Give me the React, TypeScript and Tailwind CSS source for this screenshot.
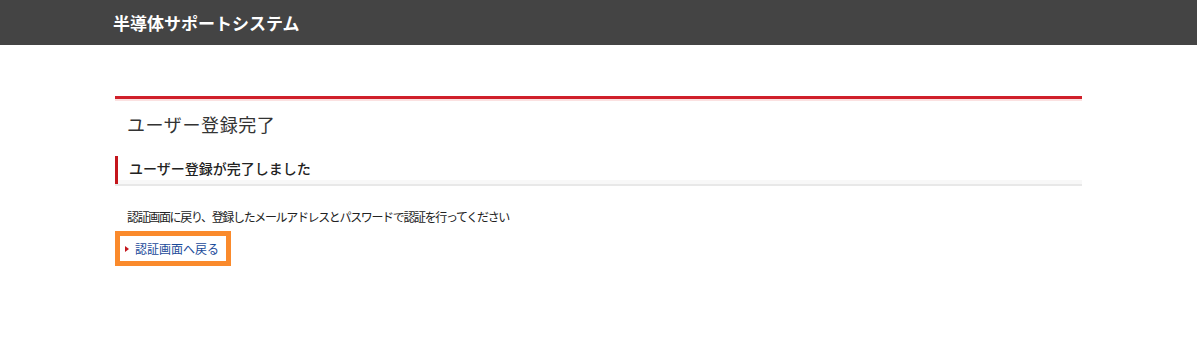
export default function App() {
  const jp = { fontFamily: '"Noto Sans CJK JP", "Noto Sans", sans-serif' };
  return (
    <div className="min-h-[360px] bg-white" style={jp}>
      <header className="h-[45px] bg-[#444444]">
        <div className="mx-auto flex h-full w-[971px] items-center">
          <h1 className="text-[17px] font-bold text-white">半導体サポートシステム</h1>
        </div>
      </header>

      <main className="mx-auto mt-[51px] w-[967px]">
        <div className="border-t-[3px] border-[#d0202a]">
          <div className="h-[2px] bg-[#fbe1e1]" />
          <h2 className="flex h-[46px] items-center pl-[12px] text-[18px] font-normal tracking-[0.6px] text-[#333]">ユーザー登録完了</h2>
        </div>

        <div className="mt-[9px]">
          <div className="flex h-[24px] items-center border-l-[3px] border-[#c4161c] pl-[11px]">
            <h3 className="text-[14px] font-medium text-[#222]">ユーザー登録が完了しました</h3>
          </div>
          <div className="h-[4px] border-l-[3px] border-[#c4161c] bg-[#f8f8f8]" />
          <div className="h-[2px] bg-[#e8e8e8]" />
        </div>

        <p className="mt-[24px] pl-[12px] text-[12px] leading-[14px] tracking-[-1.35px] text-[#222]">
          認証画面に戻り、登録したメールアドレスとパスワードで認証を行ってください
        </p>

        <div className="mt-[7px] flex h-[35px] w-[116px] items-center border-[5px] border-[#fa8a2c] pl-[5px]">
          <a href="#" className="flex items-center gap-[6px] text-[12px] leading-[14px] text-[#1a4a9a]">
            <span className="h-0 w-0 border-y-[3px] border-l-[4px] border-y-transparent border-l-[#c4161c]" />
            認証画面へ戻る
          </a>
        </div>
      </main>
    </div>
  );
}
